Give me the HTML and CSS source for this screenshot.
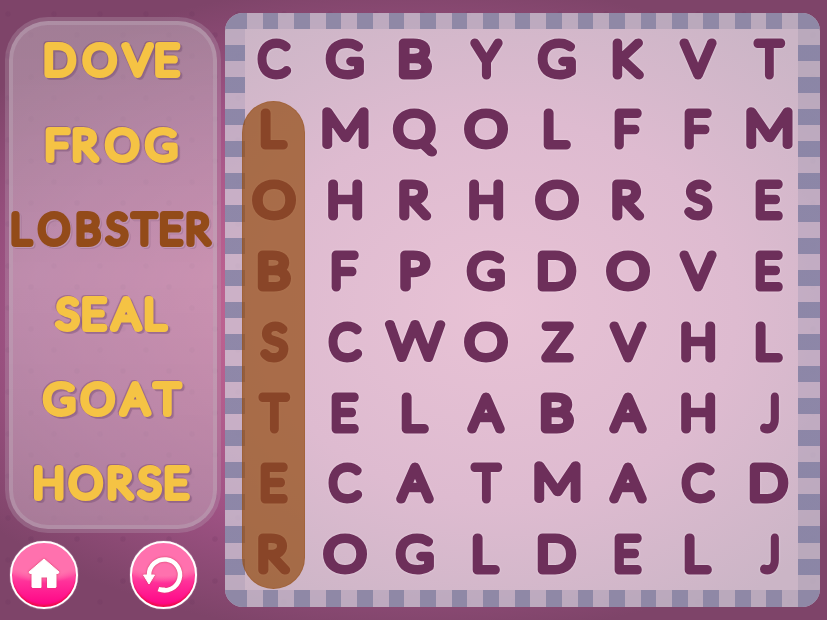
FILE: index.html
```html
<!DOCTYPE html>
<html lang="en">
<head>
<meta charset="utf-8">
<title>Word search</title>
<link rel="stylesheet" href="styles.css">
</head>
<body>
<main class="game">
  <aside class="side">
    <section class="words" id="words"></section>
    <nav class="actions">
      <button class="round" aria-label="Home">
        <svg viewBox="0 0 68 68"><path class="icon-fill" d="M34 18 49 31Q49 33 46 32.5V46Q46 46.500 45 46.500H37.500V36H31V46.500H23Q22 46.500 22 46V32.500Q19 33 19 31Z"/></svg>
      </button>
      <button class="round" aria-label="Restart">
        <svg viewBox="0 0 68 68"><path class="icon-line" d="M19 34A15.5 15.5 0 1 1 28.5 48.2Q31 49 34.2 48.7"/><path class="icon-fill" d="M13.5 34H24.5L19 43Z"/></svg>
      </button>
    </nav>
  </aside>
  <section class="board">
    <div class="edge"></div>
    <div class="middle"><div class="rail"></div><div class="field"></div><div class="rail"></div></div>
    <div class="edge"></div>
    <div class="letters" id="letters"></div>
    <div class="found"></div>
  </section>
</main>
<script src="game.js"></script>
</body>
</html>
```
FILE: styles.css
```css
* { box-sizing: border-box; }
body { margin: 0; font-family: Lato, sans-serif; }
.game {
  width: 827px; height: 620px; display: flex; overflow: hidden;
  padding: 13px 7px 13px 5px; gap: 4px;
  background:
    radial-gradient(circle, rgba(80,30,75,.11) 0 2px, transparent 3.5px) 8px 14px / 46px 42px,
    radial-gradient(circle, rgba(80,30,75,.09) 0 2px, transparent 3.5px) 31px 35px / 46px 42px,
    radial-gradient(ellipse 560px 330px at 50% 50%, #e9769e 0, #b9608f 36%, #a05385 68%, #7e4469 100%);
}
.side { width: 216px; flex: none; padding-top: 4px; }
.words {
  height: 516px; padding: 4px; border-radius: 43px;
  border: 4px solid rgba(190,170,185,.28);
  background: linear-gradient(rgba(184,160,177,.62), rgba(214,182,202,.58) 50%, rgba(190,155,178,.62)) padding-box;
  box-shadow: inset 0 0 0 4px rgba(190,170,185,.4);
  display: grid; grid-template-rows: repeat(6, 84.7px);
}
.words svg { display: block; width: 216px; height: 84.7px; margin-left: -8px; margin-top: -7px; overflow: visible; }
svg text { stroke-linejoin: round; stroke-linecap: round; font-weight: 100; }
.word { fill: #f5c344; stroke: #f5c344; stroke-width: 7.8px; font-size: 39px; filter: drop-shadow(2px 2px 0 rgba(105,65,105,.35)) drop-shadow(-.5px -.5px 0 rgba(105,55,90,.35)); }
.word.done { fill: #934b19; stroke: #934b19; filter: drop-shadow(1.5px 1.5px 0 rgba(225,190,210,.5)) drop-shadow(1px 1px 0 rgba(105,65,105,.4)); }
.letter { fill: #6d2f5a; stroke: #6d2f5a; stroke-width: 9px; font-size: 46.6px; filter: drop-shadow(0 0 1px rgba(255,240,250,.55)); }
.letter.dense { stroke-width: 8px; font-size: 47.6px; }
.actions { display: flex; gap: 52px; padding: 8px 0 0 5px; }
.round {
  width: 67.5px; height: 67.5px; padding: 0; border-radius: 50%; border: 2px solid #fff;
  background: radial-gradient(ellipse 46px 30px at 50% 16%, #ff71ae 0 75%, transparent 100%), linear-gradient(#ff6dab 40%, #ff329a 60%, #ff0787 95%);
  box-shadow: inset 0 -3px 2px -1px #ed1148, 0 0 1px #fff;
}
.round svg { display: block; width: 68px; height: 68px; margin: -2px; filter: drop-shadow(0 0 1px #d94067); }
.icon-fill { fill: #fff; stroke: #fff; stroke-linejoin: round; }
.icon-line { fill: none; stroke: #fff; stroke-width: 4.5px; stroke-linecap: round; }
.board {
  position: relative; flex: none; width: 594.5px; height: 594px;
  border-radius: 18px; overflow: hidden; display: grid; grid-template-rows: 16px 1fr 17px;
  background: rgba(209,208,220,.72);
}
.edge {
  background: linear-gradient(90deg, #8f88a6 22px, transparent 22px calc(100% - 21.5px), #8f88a6 calc(100% - 21.5px)),
    repeating-linear-gradient(90deg, transparent 0 15.9px, #8f88a6 15.9px 31.47px) 22px 0 / 551px 100% no-repeat;
}
.middle { display: grid; grid-template-columns: 20px 1fr 21.5px; }
.rail { background: repeating-linear-gradient(transparent 0 16px, rgba(126,124,160,.78) 16px 32.1px); }
.field { background: radial-gradient(ellipse 430px 350px at 46% 50%, #e8c2d5 0, #debbd0 55%, #cbb5c6 100%); }
.letters {
  position: absolute; left: 13.8px; top: 9.7px;
  display: grid; grid-template-columns: repeat(8, 70.75px); grid-template-rows: repeat(8, 70.8px);
}
.letters svg { width: 70.75px; height: 70.8px; display: block; overflow: visible; }
.found { position: absolute; left: 17.2px; top: 88px; width: 63px; height: 488px; border-radius: 32px; background: rgba(148,77,21,.72); border: 1px solid rgba(148,77,21,.25); }
```
FILE: game.js
```js
const NS = "http://www.w3.org/2000/svg";
const pen = document.createElement("canvas").getContext("2d");

// Ink extent of a glyph at the given size.
function ink(ch, size) {
  pen.font = `100 ${size}px Lato`;
  const m = pen.measureText(ch);
  return { left: -m.actualBoundingBoxLeft, right: m.actualBoundingBoxRight };
}

function label(parent, cls, value) {
  const svg = document.createElementNS(NS, "svg");
  const text = document.createElementNS(NS, "text");
  text.setAttribute("class", cls);
  text.textContent = value;
  svg.append(text);
  parent.append(svg);
  return text;
}

// Each word with the centre of every letter in the panel.
const words = [
  ["DOVE", [60.5, 99.5, 137.5, 168]],
  ["FROG", [58.5, 86.5, 122, 161]],
  ["LOBSTER", [22.5, 54, 89, 117.5, 144.5, 172, 199.5]],
  ["SEAL", [68, 95, 126, 156.5]],
  ["GOAT", [59, 97.5, 135, 167.5]],
  ["HORSE", [48.7, 85.5, 121.5, 150, 177.5]]
];
for (const [word, centres] of words) {
  const done = word === "LOBSTER";
  const stretch = done ? 1 : 1.06;
  const text = label(document.getElementById("words"), done ? "word done" : "word", word);
  const xs = [...word].map((ch, i) => {
    const b = ink(ch, 39);
    return ((centres[i] - 5.2) / stretch - (b.left + b.right) / 2).toFixed(2);
  });
  text.setAttribute("transform", `scale(${stretch} 1)`);
  text.setAttribute("x", xs.join(" "));
  text.setAttribute("y", 55.6);
}

// Drawn width of each capital on the board, stroke included.
const widths = { A: 38, B: 34, C: 34, D: 40, E: 28, F: 28, G: 39.5, H: 35, J: 19.5, K: 32, L: 28, M: 47,
  O: 45, P: 31, Q: 45, R: 33, S: 29, T: 32.5, V: 37.5, W: 62, Y: 33.5, Z: 34 };
const rows = ["CGBYGKVT", "LMQOLFFM", "OHRHORSE", "BFPGDOVE", "SCWOZVHL", "TELABAHJ", "ECATMACD", "ROGLDELJ"];
for (const ch of rows.join("")) {
  const dense = "MW".includes(ch);
  const text = label(document.getElementById("letters"), dense ? "letter dense" : "letter", ch);
  const b = ink(ch, dense ? 47.6 : 46.6);
  const scale = widths[ch] / (b.right - b.left + (dense ? 8 : 9));
  text.setAttribute("transform", `translate(35.2 52.2) scale(${scale.toFixed(3)} 1)`);
  text.setAttribute("x", (-(b.left + b.right) / 2).toFixed(2));
}
```
